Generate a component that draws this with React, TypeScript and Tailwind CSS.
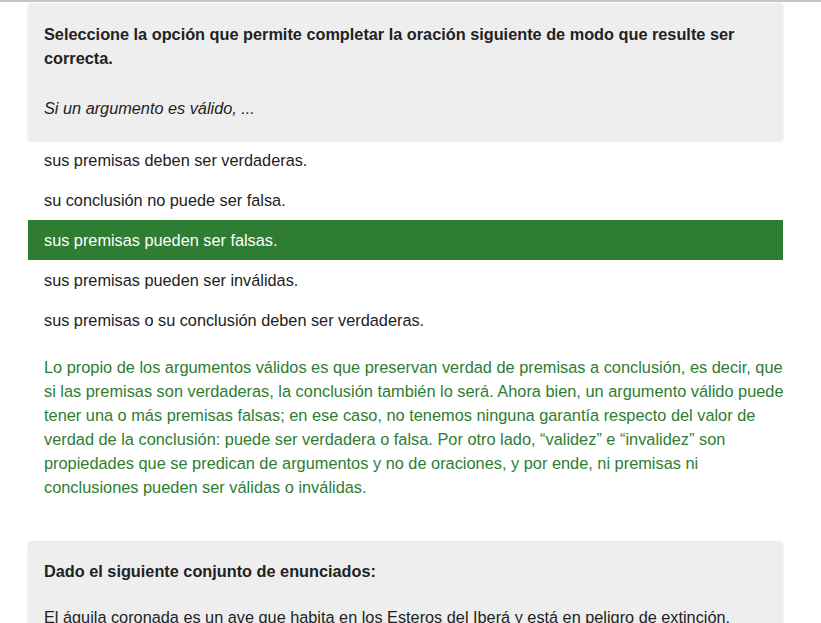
import React from "react";

const options = [
  "sus premisas deben ser verdaderas.",
  "su conclusión no puede ser falsa.",
  "sus premisas pueden ser falsas.",
  "sus premisas pueden ser inválidas.",
  "sus premisas o su conclusión deben ser verdaderas.",
];

const App = () => {
  return (
    <div
      className="min-h-screen bg-white border-t-2 border-[#c6c6c6] text-[#222] text-[16.3px] leading-6"
      style={{ fontFamily: '"Liberation Sans", Arial, sans-serif' }}
    >
      <div className="mx-[28px] w-[755px] pt-px">
        <div className="rounded bg-[#eeeeee] px-4 pt-[19px] pb-[20px] shadow-sm">
          <p className="font-bold">
            Seleccione la opción que permite completar la oración siguiente de modo que resulte ser
            correcta.
          </p>
          <p className="mt-[26px] italic">Si un argumento es válido, ...</p>
        </div>

        <ul>
          {options.map((o, i) => (
            <li
              key={i}
              className={
                i === 2
                  ? "px-4 py-2 bg-[#2e7d32] text-white"
                  : "px-4 py-2"
              }
            >
              {o}
            </li>
          ))}
        </ul>

        <p className="mt-[15px] pl-4 -mr-1 text-[16.35px] text-[#2e7d32]">
          Lo propio de los argumentos válidos es que preservan verdad de premisas a conclusión, es decir, que
          si las premisas son verdaderas, la conclusión también lo será. Ahora bien, un argumento válido puede
          tener una o más premisas falsas; en ese caso, no tenemos ninguna garantía respecto del valor de
          verdad de la conclusión: puede ser verdadera o falsa. Por otro lado, “validez” e “invalidez” son
          propiedades que se predican de argumentos y no de oraciones, y por ende, ni premisas ni
          conclusiones pueden ser válidas o inválidas.
        </p>

        <div className="mt-[42px] rounded bg-[#eeeeee] px-4 pt-[18px] pb-[21px] shadow-sm">
          <p className="font-bold">Dado el siguiente conjunto de enunciados:</p>
          <p className="mt-[22px]">
            El águila coronada es un ave que habita en los Esteros del Iberá y está en peligro de extinción.
          </p>
        </div>
      </div>
    </div>
  );
};

export default App;
